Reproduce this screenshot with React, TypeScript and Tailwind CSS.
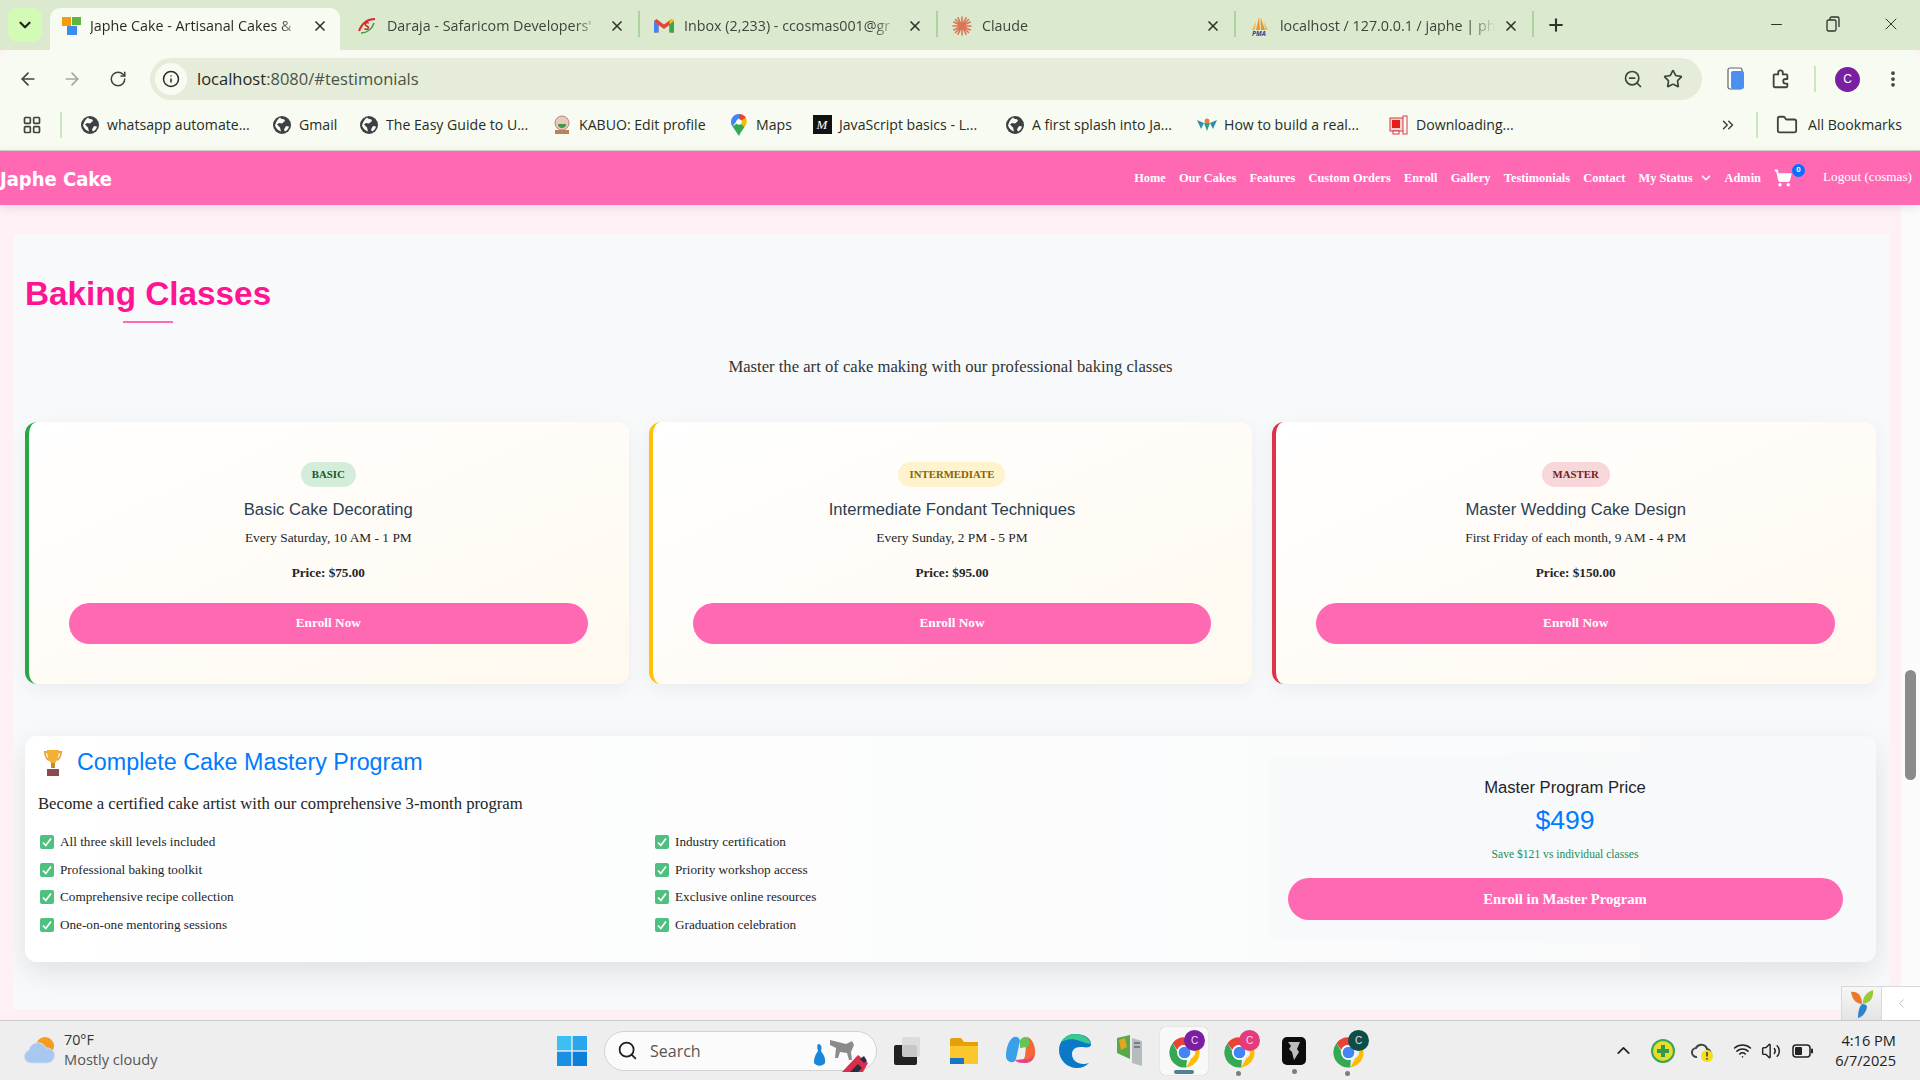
import { ArrowLeft, ArrowRight, RotateCw, Info, ZoomOut, Star, EllipsisVertical, ChevronsRight, Folder, ChevronDown, ChevronUp, ShoppingCart, Plus, X, Minus, LayoutGrid, Search, Wifi, Volume2, ChevronLeft } from 'lucide-react'
import type { ReactNode } from 'react'

const uiFont = "font-['Open_Sans','Noto_Sans',sans-serif]"
const serif = "font-['Liberation_Serif','Times_New_Roman',serif]"
const sans = "font-['Liberation_Sans',Arial,sans-serif]"

function ChromeIcon({ size = 32 }: { size?: number }) {
  return (
    <svg width={size} height={size} viewBox="0 0 48 48">
      <path d="M24 2a22 22 0 0 1 19 11H24a11 11 0 0 0-10.500 7.500L6.500 10.500A22 22 0 0 1 24 2z" fill="#ea4335" />
      <path d="M43 13a22 22 0 0 1-16.500 32.800L34 32.500a11 11 0 0 0-.500-19.500z" fill="#fbbc04" />
      <path d="M26.500 45.800A22 22 0 0 1 6.500 10.500L14.500 24a11 11 0 0 0 13 10z" fill="#34a853" />
      <circle cx="24" cy="24" r="11" fill="#fff" />
      <circle cx="24" cy="24" r="8.500" fill="#4285f4" />
    </svg>
  )
}

function TaskChrome({ badge, letter, active }: { badge: string; letter: string; active?: boolean }) {
  return (
    <div className={`relative flex h-[48px] w-[48px] items-center justify-center rounded-[5px] ${active ? 'bg-[#f8f8f8] shadow-[0_0_1px_rgba(0,0,0,0.3)]' : ''}`}>
      <div className="mt-[4px]">
        <ChromeIcon size={33} />
      </div>
      <span className={`absolute right-[3px] top-[3px] flex h-[21px] w-[21px] items-center justify-center rounded-full text-[10px] text-[#f3d9f5] ${badge} ${sans}`}>
        {letter}
      </span>
      {active ? (
        <span className="absolute bottom-[1px] left-[14px] h-[4px] w-[20px] rounded-full bg-[#4f8291]" />
      ) : (
        <span className="absolute bottom-[-1px] left-[21px] h-[5px] w-[5px] rounded-full bg-[#7d7d7d]" />
      )}
    </div>
  )
}

function Tab({ icon, title, active, size }: { icon: ReactNode; title: string; active?: boolean; size?: string }) {
  return (
    <div className={`relative flex h-[42px] items-center pb-[6px] ${active ? 'w-[290px] rounded-t-[10px] bg-[#f8fbf2] pl-[11px] pr-[12px]' : `pr-[15px] ${size ?? 'w-[298px] pl-[14px]'}`}`}>
      <span className="flex h-[20px] w-[20px] shrink-0 items-center justify-center">{icon}</span>
      <span className={`flex-1 overflow-hidden whitespace-nowrap text-[14.300px] [mask-image:linear-gradient(to_right,black_88%,transparent)] ${active ? 'ml-[9px] text-[#1f2a1c]' : 'ml-[10px] text-[#3c4638]'} ${uiFont}`}>{title}</span>
      <X size={16} strokeWidth={2.500} className="ml-[8px] shrink-0 text-[#2e352b]" />
      {!active && <span className="absolute right-0 top-[3px] h-[26px] w-[2px] bg-[#a9d49a]" />}
    </div>
  )
}

function GlobeIcon() {
  return (
    <svg width="18" height="18" viewBox="0 0 18 18">
      <circle cx="9" cy="9" r="9" fill="#3c4043" />
      <path d="M7 1.500c1 1.500 3 2 4 1.500l1 2-3 2.500-3-.5-2 1.500 3 3 1 4c-3-1-5-3-6-6 1-4 3-6.500 5-8zM13 10l3 .5c-.5 2.500-2 4-4 5l-1-2z" fill="#f8fbf2" />
    </svg>
  )
}

function Bookmark({ icon, label, width }: { icon: ReactNode; label: string; width: string }) {
  return (
    <div className={`flex shrink-0 items-center ${width}`}>
      <span className="flex h-[20px] w-[20px] shrink-0 items-center justify-center">{icon}</span>
      <span className={`ml-[7px] whitespace-nowrap text-[14.100px] text-[#262d24] ${uiFont}`}>{label}</span>
    </div>
  )
}

const navItems = ['Home', 'Our Cakes', 'Features', 'Custom Orders', 'Enroll', 'Gallery', 'Testimonials', 'Contact']

function CheckEmoji() {
  return (
    <svg width="14" height="14" viewBox="0 0 14 14" className="shrink-0">
      <rect width="14" height="14" rx="2" fill="#4fc07f" />
      <path d="M3 7.500 5.800 10.500 11 3.500" stroke="#fff" strokeWidth="1.700" fill="none" />
    </svg>
  )
}

function ClassCard({ level, pill, border, title, when, price }: { level: string; pill: string; border: string; title: string; when: string; price: string }) {
  return (
    <div className={`flex h-[262px] flex-col items-center rounded-[12px] border-l-4 bg-linear-to-br from-white to-[#fff9ef] pl-[40px] pr-[41px] pt-[40px] shadow-[0_5px_20px_rgba(0,0,0,0.06)] ${border}`}>
      <span className={`flex h-[25px] items-center rounded-full px-[11px] text-[10.800px] font-bold ${pill} ${serif}`}>{level}</span>
      <h3 className={`mt-[9px] text-[16.640px] leading-[28px] text-[#2c3e50] ${sans}`}>{title}</h3>
      <p className={`mt-[4px] text-[13.400px] leading-[20px] text-[#212529] ${serif}`}>{when}</p>
      <p className={`mt-[15px] text-[13.200px] font-bold leading-[20px] text-[#212529] ${serif}`}>{price}</p>
      <button className={`mt-[20px] h-[41px] w-full rounded-full bg-[#ff69b4] pb-[1px] text-[13.300px] font-bold text-white ${serif}`}>Enroll Now</button>
    </div>
  )
}

const features = [
  'All three skill levels included',
  'Industry certification',
  'Professional baking toolkit',
  'Priority workshop access',
  'Comprehensive recipe collection',
  'Exclusive online resources',
  'One-on-one mentoring sessions',
  'Graduation celebration',
]

export default function App() {
  return (
    <div className="flex h-screen w-[1920px] flex-col overflow-hidden bg-[#fff0f5]">
      {/* tab strip */}
      <div className="flex h-[50px] shrink-0 items-end bg-[#dbe9cf] pl-[8px]">
        <div className="mb-[8px] mr-[8px] flex h-[34px] w-[34px] items-center justify-center rounded-[9px] bg-[#d3fbb6]">
          <ChevronDown size={18} strokeWidth={3} className="text-[#1d2a19]" />
        </div>
        <Tab
          active
          title="Japhe Cake - Artisanal Cakes &"
          icon={
            <svg width="19" height="18" viewBox="0 0 19 18">
              <rect width="9" height="9" fill="#f59c0b" />
              <rect x="10" width="9" height="8" fill="#5fb53d" />
              <rect x="5" y="9" width="10" height="9" fill="#3b8cf2" />
            </svg>
          }
        />
        <div className="w-[5px]" />
        <Tab
          size="w-[295px] pl-[12px]"
          title="Daraja - Safaricom Developers'"
          icon={
            <svg width="20" height="18" viewBox="0 0 20 18">
              <path d="M2 14C5 6 11 2 18 2" stroke="#dd2b2b" strokeWidth="2" fill="none" />
              <path d="M4 16C10 16 15 12 17 6" stroke="#3a9a3e" strokeWidth="1.500" fill="none" />
              <text x="7" y="13" fontSize="10" fontWeight="700" fill="#d21f1f">S</text>
            </svg>
          }
        />
        <Tab
          title="Inbox (2,233) - ccosmas001@gr"
          icon={
            <svg width="20" height="16" viewBox="0 0 20 16">
              <path d="M0 3v11.500h4.500V7L10 11l5.500-4v7.500H20V3l-2.500-2L10 6.500 2.500 1z" fill="#ea4335" />
              <path d="M0 3v11.500h4.500V6.500z" fill="#4285f4" />
              <path d="M20 3v11.500h-4.500V6.500z" fill="#34a853" />
              <path d="M20 3l-4.500 3.500V2.500L17.500 1z" fill="#fbbc04" />
            </svg>
          }
        />
        <Tab
          title="Claude"
          icon={
            <svg width="20" height="20" viewBox="0 0 20 20" stroke="#d97757" strokeWidth="1.600" strokeLinecap="round">
              <path d="M10 1v18M1 10h18M3.500 3.500l13 13M16.500 3.500l-13 13M6 1.800l8 16.400M14 1.800 6 18.200M1.800 6l16.400 8M18.200 6 1.800 14" />
            </svg>
          }
        />
        <Tab
          title="localhost / 127.0.0.1 / japhe | ph"
          icon={
            <svg width="20" height="20" viewBox="0 0 20 20">
              <path d="M6 14 9 1l1 13zM11 14l-.500-13L15 14z" fill="#f0932b" />
              <path d="M2 14 6 5l-1 9zM15 14l-1-8 4 8z" fill="#f7b955" />
              <text x="2" y="20" fontSize="6.500" fontWeight="700" fontStyle="italic" fill="#2f3f8f">PMA</text>
            </svg>
          }
        />
        <Plus size={20} strokeWidth={2.500} className="mb-[15px] ml-[12px] text-[#2e352b]" />
        <div className="mb-[16px] ml-auto flex w-[152px] items-center justify-between pr-[19px] text-[#2e352b]">
          <Minus size={17} strokeWidth={1.500} />
          <svg width="14" height="16" viewBox="0 0 14 16" fill="none" stroke="#2e352b" strokeWidth="1.300">
            <rect x="1" y="4" width="9" height="11" rx="1.500" />
            <path d="M4 4V2.500A1.500 1.500 0 0 1 5.500 1h6A1.500 1.500 0 0 1 13 2.500V11" />
          </svg>
          <X size={20} strokeWidth={1.200} />
        </div>
      </div>

      {/* address bar */}
      <div className="flex h-[50px] shrink-0 items-center rounded-t-[10px] bg-[#f8fbf2] pt-[8px]">
        <ArrowLeft size={20} strokeWidth={2} className="ml-[18px] text-[#3c4638]" />
        <ArrowRight size={20} strokeWidth={2} className="ml-[24px] text-[#a3a89f]" />
        <RotateCw size={18} strokeWidth={2} className="ml-[27px] text-[#3c4638]" />
        <div className="ml-[23px] flex h-[42px] w-[1552px] items-center rounded-full bg-[#e5edda] pl-[5px]">
          <span className="flex h-[32px] w-[32px] items-center justify-center rounded-full bg-[#f8fbf2]">
            <Info size={18} strokeWidth={2} className="text-[#262d24]" />
          </span>
          <span className={`ml-[10px] text-[16.500px] text-[#4a5346] ${uiFont}`}>
            <span className="text-[#1f2a1c]">localhost</span>:8080/#testimonials
          </span>
          <ZoomOut size={20} strokeWidth={2} className="ml-auto text-[#3c4638]" />
          <Star size={20} strokeWidth={2} className="ml-[20px] mr-[19px] text-[#3c4638]" />
        </div>
        <svg width="20" height="24" viewBox="0 0 20 24" className="ml-[24px]">
          <rect x="2" y="1" width="14" height="21" rx="2" fill="#fff" stroke="#5b6470" strokeWidth="1.200" />
          <rect x="5" y="4" width="13" height="18" rx="2" fill="#4a90f0" />
        </svg>
        <svg width="21" height="24" viewBox="0 0 23 24" fill="none" stroke="#3c4638" strokeWidth="2" strokeLinejoin="round" className="ml-[24px]">
          <path d="M5 7h4V5a2.500 2.500 0 0 1 5 0v2h4a1 1 0 0 1 1 1v4h-2a2.500 2.500 0 0 0 0 5h2v3a1 1 0 0 1-1 1H5a1 1 0 0 1-1-1V8a1 1 0 0 1 1-1z" />
        </svg>
        <span className="ml-[23px] h-[26px] w-[2px] bg-[#cce7bd]" />
        <span className={`ml-[19px] flex h-[25px] w-[25px] items-center justify-center rounded-full bg-[#7b1fa2] text-[12px] text-white ${sans}`}>C</span>
        <EllipsisVertical size={20} strokeWidth={2.500} className="ml-[23px] text-[#3c4638]" />
      </div>

      {/* bookmarks */}
      <div className="flex h-[51px] shrink-0 items-center border-b border-[#d5d9cf] bg-[#f8fbf2] pl-[22px]">
        <LayoutGrid size={20} strokeWidth={2} className="text-[#3c4638]" />
        <span className="ml-[18px] mr-[18px] h-[26px] w-[2px] bg-[#cce7bd]" />
        <Bookmark width="w-[192px]" icon={<GlobeIcon />} label="whatsapp automate..." />
        <Bookmark width="w-[87px]" icon={<GlobeIcon />} label="Gmail" />
        <Bookmark width="w-[193px]" icon={<GlobeIcon />} label="The Easy Guide to U..." />
        <Bookmark
          width="w-[177px]"
          label="KABUO: Edit profile"
          icon={
            <svg width="20" height="20" viewBox="0 0 20 20">
              <circle cx="10" cy="8" r="7" fill="#e9c8bf" stroke="#b98870" />
              <path d="M6 9a4 4 0 0 0 8 0z" fill="#3f9a45" />
              <rect x="3" y="15" width="14" height="4" fill="#b98359" />
            </svg>
          }
        />
        <Bookmark
          width="w-[83px]"
          label="Maps"
          icon={
            <svg width="16" height="22" viewBox="0 0 16 22">
              <path d="M8 0a8 8 0 0 0-6.500 12.600L8 4z" fill="#4285f4" />
              <path d="M8 0a8 8 0 0 1 7 4L8 8z" fill="#ea4335" />
              <path d="M15 4c1.500 3.500.5 6.500-1.500 9L8 8z" fill="#fbbc04" />
              <path d="M1.500 12.600 8 22c1.500-3.500 3.500-6 5.500-9L8 8z" fill="#34a853" />
              <circle cx="8" cy="8" r="2.700" fill="#fff" />
            </svg>
          }
        />
        <Bookmark
          width="w-[193px]"
          label="JavaScript basics - L..."
          icon={<span className={`flex h-[19px] w-[19px] items-center justify-center bg-[#121212] text-[13px] italic text-white ${serif}`}>M</span>}
        />
        <Bookmark width="w-[192px]" icon={<GlobeIcon />} label="A first splash into Ja..." />
        <Bookmark
          width="w-[192px]"
          label="How to build a real..."
          icon={
            <svg width="20" height="14" viewBox="0 0 20 14">
              <path d="M0 2 4 11l3-6z" fill="#2d8fa8" />
              <path d="M7 5l3 8 3-8z" fill="#2b9c8a" />
              <path d="M13 5l3 6 4-9z" fill="#2d8fa8" />
              <circle cx="10" cy="3" r="2.500" fill="#e9803a" />
            </svg>
          }
        />
        <Bookmark
          width="w-[330px]"
          label="Downloading..."
          icon={
            <svg width="20" height="20" viewBox="0 0 20 20">
              <rect x="1" y="3" width="14" height="13" fill="#f7d3d3" stroke="#d63b3b" />
              <rect x="3" y="5" width="8" height="8" fill="#e31c1c" />
              <rect x="14" y="1" width="4" height="18" fill="#fff" stroke="#d63b3b" />
              <rect x="4" y="16" width="6" height="3" fill="#fff" stroke="#d63b3b" />
            </svg>
          }
        />
        <ChevronsRight size={18} strokeWidth={2} className="text-[#3c4638]" />
        <span className="ml-[19px] h-[26px] w-[2px] bg-[#cce7bd]" />
        <Folder size={22} strokeWidth={2} className="ml-[18px] text-[#3c4638]" />
        <span className={`ml-[10px] whitespace-nowrap text-[14.100px] text-[#262d24] ${uiFont}`}>All Bookmarks</span>
      </div>

      {/* site nav */}
      <nav className="z-10 flex h-[54px] shrink-0 items-center bg-[#ff69b4] shadow-[0_2px_10px_rgba(0,0,0,0.1)]">
        <span className="mt-[1px] text-[20px] font-bold text-white font-['Comic_Sans_MS','DejaVu_Sans_Condensed','DejaVu_Sans',sans-serif]">Japhe Cake</span>
        <div className={`ml-auto flex items-center text-[12.400px] font-bold text-white ${serif}`}>
          {navItems.map(item => (
            <a key={item} className="mr-[13.200px] whitespace-nowrap">{item}</a>
          ))}
          <a className="flex items-center whitespace-nowrap">
            My Status
            <ChevronDown size={14} strokeWidth={3} className="ml-[6px]" />
          </a>
          <a className="ml-[12px]">Admin</a>
          <span className="relative ml-[13px] mr-[31px]">
            <ShoppingCart size={18} strokeWidth={2.500} fill="#fff" />
            <span className={`absolute -right-[13px] -top-[5px] flex h-[13px] w-[13px] items-center justify-center rounded-full bg-[#0d6efd] text-[8px] ${sans}`}>0</span>
          </span>
          <a className="mb-[2px] mr-[8px] whitespace-nowrap text-[13.200px] font-normal">Logout (cosmas)</a>
        </div>
      </nav>

      {/* page */}
      <div className="flex min-h-0 flex-1">
        <main className="w-[1901px] shrink-0 pl-[13px] pr-[12px] pt-[29px]">
          <section className="h-[775px] overflow-hidden bg-[#f8f9fa] pl-[12px] pr-[13px]">
            <h2 className={`pt-[37px] text-[33.300px] font-bold leading-[46px] text-[#ff1493] ${sans}`}>Baking Classes</h2>
            <div className="ml-[98px] mt-[4px] h-[2px] w-[50px] bg-[#ff69b4]" />
            <p className={`mt-[31px] text-center text-[16.640px] leading-[26px] text-[#333] ${serif}`}>Master the art of cake making with our professional baking classes</p>
            <div className="mt-[42px] grid grid-cols-3 gap-[20px]">
              <ClassCard level="BASIC" pill="bg-[#d4edda] text-[#155724]" border="border-[#28a745]" title="Basic Cake Decorating" when="Every Saturday, 10 AM - 1 PM" price="Price: $75.00" />
              <ClassCard level="INTERMEDIATE" pill="bg-[#fff3cd] text-[#856404]" border="border-[#ffc107]" title="Intermediate Fondant Techniques" when="Every Sunday, 2 PM - 5 PM" price="Price: $95.00" />
              <ClassCard level="MASTER" pill="bg-[#f8d7da] text-[#721c24]" border="border-[#dc3545]" title="Master Wedding Cake Design" when="First Friday of each month, 9 AM - 4 PM" price="Price: $150.00" />
            </div>
            <div className="mt-[52px] flex h-[226px] rounded-[12px] bg-linear-to-r from-white to-[#f8f9fa] pl-[13px] pr-[15px] shadow-[0_10px_30px_rgba(0,0,0,0.1)]">
              <div className="flex-1">
                <div className="ml-[5px] mt-[12px] flex h-[28px] items-center">
                  <svg width="20" height="28" viewBox="0 0 20 28" className="mt-[2px]">
                    <path d="M1 2h4v2H3c0 3 1 5 3 6v2C3 11 1 7 1 2zM19 2h-4v2h2c0 3-1 5-3 6v2c3-1 5-5 5-10z" fill="#e8a33a" />
                    <path d="M4 1h12c0 7-2 11-4 13v4H8v-4C6 12 4 8 4 1z" fill="#f2b035" />
                    <rect x="8" y="14" width="4" height="5" fill="#c98a2c" />
                    <rect x="4" y="20" width="12" height="7" fill="#8a4a4f" />
                  </svg>
                  <h3 className={`ml-[14px] whitespace-nowrap text-[23.300px] text-[#007bff] ${sans}`}>Complete Cake Mastery Program</h3>
                </div>
                <p className={`mt-[15px] text-[16.680px] leading-[26px] text-[#212529] ${serif}`}>Become a certified cake artist with our comprehensive 3-month program</p>
                <ul className="mt-[11px] grid grid-cols-[615px_1fr]">
                  {features.map(f => (
                    <li key={f} className={`flex h-[27.700px] items-center pl-[2px] text-[13.200px] text-[#212529] ${serif}`}>
                      <CheckEmoji />
                      <span className="ml-[6px]">{f}</span>
                    </li>
                  ))}
                </ul>
              </div>
              <div className="mt-[21px] flex h-[183px] w-[592px] flex-col items-center rounded-[8px] bg-[#f8f9fa] px-[18px] pt-[19px]">
                <p className={`text-[16.640px] leading-[24px] text-[#212529] ${sans}`}>Master Program Price</p>
                <p className={`mt-[2px] text-[26.600px] leading-[36px] text-[#007bff] ${sans}`}>$499</p>
                <p className={`mt-[7px] text-[11.600px] leading-[20px] text-[#218c53] ${serif}`}>Save $121 vs individual classes</p>
                <button className={`mt-[13px] h-[42px] w-[555px] shrink-0 rounded-full bg-[#ff69b4] text-[14.700px] font-bold text-white ${serif}`}>Enroll in Master Program</button>
              </div>
            </div>
          </section>
        </main>
        <div className="relative flex-1 bg-[#fbfbfb]">
          {/* page scrollbar */}
          <div className="absolute left-[4px] top-[465px] h-[110px] w-[11px] rounded-full bg-[#8b8b8b]" />
          {/* debug toolbar */}
          <div className="absolute -left-[60px] bottom-0 flex h-[34px] w-[79px] border-l border-t border-[#d8d8d8]">
            <div className="flex w-[39px] items-center justify-center bg-linear-to-b from-[#f7f7f7] to-[#e4e4e4]">
              <svg width="24" height="30" viewBox="0 0 24 30">
                <path d="M1 3c6-1 11 3 11 12C6 15 2 10 1 3z" fill="#e8792a" />
                <path d="M23 1c1 6-2 13-10 14C12 8 17 3 23 1z" fill="#9ac93c" />
                <path d="M12 15c3 0 5 1 5 3-1 6-5 10-9 11 0-6 1-11 4-14z" fill="#2e84cc" />
              </svg>
            </div>
            <div className="flex flex-1 items-center justify-center border-l border-[#d8d8d8] bg-white">
              <ChevronLeft size={15} strokeWidth={1} className="text-[#9a9a9a]" />
            </div>
          </div>
        </div>
      </div>

      {/* taskbar */}
      <div className="z-10 flex h-[60px] shrink-0 items-center border-t border-[#c9c9c9] bg-[#eeeeee]">
        <svg width="34" height="32" viewBox="0 0 34 32" className="ml-[23px]">
          <circle cx="22" cy="11" r="9" fill="#f59c1a" />
          <path d="M8 28a6.500 6.500 0 0 1-2-12.700A9 9 0 0 1 23 13a7.500 7.500 0 0 1 2 15z" fill="#a9c8f0" stroke="#cfe0f7" />
        </svg>
        <div className={`mb-[2px] ml-[7px] w-[150px] text-[#333] ${uiFont}`}>
          <p className="mb-[1px] text-[14.300px] leading-[19px]">70°F</p>
          <p className="text-[14.600px] leading-[19px] text-[#555]">Mostly cloudy</p>
        </div>
        <svg width="30" height="30" viewBox="0 0 30 30" className="ml-[343px]">
          <rect width="14.300" height="14.300" fill="#3cc0f3" />
          <rect x="15.700" width="14.300" height="14.300" fill="#2aa7ec" />
          <rect y="15.700" width="14.300" height="14.300" fill="#1a8fe3" />
          <rect x="15.700" y="15.700" width="14.300" height="14.300" fill="#0c7fd9" />
        </svg>
        <div className="relative ml-[17px] flex h-[40px] w-[273px] items-center rounded-full border border-[#d2d2d2] bg-[#fbfbfb] pl-[12px]">
          <Search size={21} strokeWidth={2} className="text-[#1f1f1f]" />
          <span className={`ml-[12px] text-[16px] text-[#555] ${uiFont}`}>Search</span>
          <svg width="62" height="40" viewBox="0 0 62 40" className="absolute right-0 top-0">
            <path d="M4 12c4 0 4 4 3 7 2 3 5 7 4 12-3 4-9 3-11 0 0-6 2-9 4-12-1-3-1-6 0-7z" fill="#1a86d8" />
            <path d="M16 8l8 2 8 2 6-3 2 4-3 7 1 8h-3l-2-7-7-1-2 6h-3l1-10-6-3z" fill="#8b8b8b" />
            <path d="M28 40l16-17 10 8-5 9z" fill="#d92e4e" />
            <path d="M36 40l8-8 4 4-4 4zM46 27l4-3 3 5-3 2z" fill="#2c2c40" />
          </svg>
        </div>
        <svg width="28" height="30" viewBox="0 0 28 30" className="ml-[16px]">
          <rect x="1" y="9" width="23" height="20" rx="2" fill="#222" />
          <rect x="9" y="1" width="18" height="20" rx="2" fill="#d9d9d9" fillOpacity="0.9" />
        </svg>
        <svg width="28" height="30" viewBox="0 0 28 30" className="ml-[29px]">
          <path d="M0 4a2 2 0 0 1 2-2h9l3 4h14v22H0z" fill="#e3a008" />
          <path d="M0 10h28v18H0z" fill="#fcc62d" />
          <rect x="0" y="22" width="14" height="6" fill="#1a74c4" />
        </svg>
        <svg width="31" height="30" viewBox="0 0 31 30" className="ml-[27px]">
          <path d="M9 1c3-1 6 1 6 4l-4 18c-1 5-10 4-10-3C1 12 4 3 9 1z" fill="#3aa0e8" />
          <path d="M22 1c5 1 9 9 8 18-1 5-5 8-9 8l-9-1c5 0 7-2 8-6z" fill="#f2683a" />
          <path d="M15 5c1-4 6-5 8-3 2 3 2 8-1 9l-7 1z" fill="#62c554" />
          <path d="M10 24c2 3 8 3 11 3 3-1 7-3 8-8-2 3-5 5-9 4z" fill="#e83e8c" />
        </svg>
        <svg width="32" height="34" viewBox="0 0 32 34" className="ml-[23px]">
          <path d="M16 0C7 0 0 7 0 16c0 10 8 18 18 18 5 0 9-2 12-5-8 3-17-1-17-9 0-4 3-7 8-7 4 0 11 2 11-3C32 4 25 0 16 0z" fill="#0c78c8" />
          <path d="M32 10C30 3 22 0 16 0 10 0 5 3 2 8c5-3 12-4 19-1 5 2 9 3 11 3z" fill="#38c98e" />
        </svg>
        <svg width="32" height="34" viewBox="0 0 32 34" className="ml-[23px]">
          <path d="M3 4l13-3v24L3 19z" fill="#56a848" />
          <path d="M5 6l6-2 2 9-6 3z" fill="#e2a71e" />
          <path d="M18 4l10 3v25l-10-3z" fill="#b5bcc0" />
          <path d="M20 8h6v2h-6zM20 12h6v2h-6z" fill="#78807f" />
        </svg>
        <div className="ml-[14px]">
          <TaskChrome active badge="bg-[#7b1fa2]" letter="C" />
        </div>
        <div className="ml-[7px]">
          <TaskChrome badge="bg-[#e63b7a]" letter="C" />
        </div>
        <div className="ml-[7px] flex h-[48px] w-[48px] items-center justify-center">
          <div className="relative flex h-[28px] w-[24px] items-center justify-center rounded-[5px] bg-[#0d0d0d]">
            <svg width="14" height="20" viewBox="0 0 14 20">
              <path d="M1 1l12 0-3 7 2 3-5 8-2-8-3-3 2-3z" fill="#bdbdbd" />
            </svg>
            <span className="absolute -bottom-[9px] left-[10px] h-[5px] w-[5px] rounded-full bg-[#7d7d7d]" />
          </div>
        </div>
        <div className="ml-[6px]">
          <TaskChrome badge="bg-[#0d4f46]" letter="C" />
        </div>
        <ChevronUp size={21} strokeWidth={2} className="ml-[241px] text-[#222]" />
        <svg width="24" height="24" viewBox="0 0 24 24" className="ml-[17px]">
          <circle cx="12" cy="12" r="11" fill="#e6dc2c" stroke="#3aa356" strokeWidth="2" />
          <path d="M10 6h4v4h4v4h-4v4h-4v-4H6v-4h4z" fill="#2f9a4c" />
        </svg>
        <svg width="24" height="24" viewBox="0 0 24 24" className="ml-[16px]">
          <path d="M6 18a4.500 4.500 0 0 1-1-9 6 6 0 0 1 11 1 4 4 0 0 1 2 7" fill="none" stroke="#444" strokeWidth="2" />
          <circle cx="16" cy="17" r="6" fill="#f5dd1e" />
          <path d="M16 13v4.500M16 19v1.500" stroke="#333" strokeWidth="1.500" />
        </svg>
        <Wifi size={19} strokeWidth={2} className="ml-[18px] text-[#222]" />
        <Volume2 size={20} strokeWidth={1.700} className="ml-[9px] text-[#222]" />
        <svg width="22" height="14" viewBox="0 0 22 14" className="ml-[11px]">
          <rect x="1" y="1" width="17" height="12" rx="3" fill="none" stroke="#222" strokeWidth="1.500" />
          <rect x="3" y="3" width="7" height="8" rx="1" fill="#222" />
          <rect x="19" y="4.500" width="2" height="5" rx="1" fill="#222" />
        </svg>
        <div className={`mb-[1px] ml-auto mr-[24px] text-right text-[#222] ${uiFont}`}>
          <p className="text-[14.600px] leading-[20px]">4:16 PM</p>
          <p className="text-[14.600px] leading-[20px]">6/7/2025</p>
        </div>
      </div>
    </div>
  )
}
